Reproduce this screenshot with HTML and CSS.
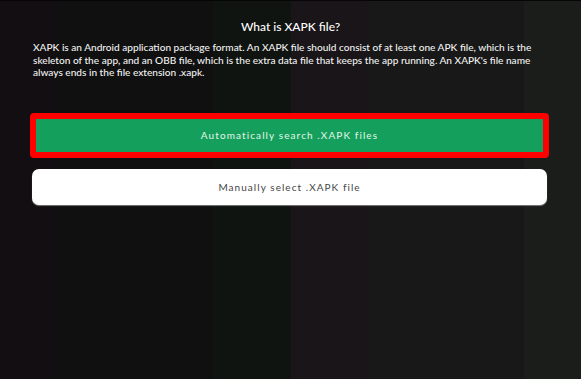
FILE: index.html
```html
<!DOCTYPE html>
<html lang="en">
<head>
	<meta charset="UTF-8">
	<meta name="viewport" content="width=device-width, initial-scale=1.0">
	<title>What is XAPK file?</title>
	<link rel="stylesheet" href="styles.css">
</head>
<body>

	<div class="container">
		<h2 class="title">What is XAPK file?</h2>
		<p class="info">XAPK is an Android application package format. An XAPK file should consist of at least one APK file, which is the skeleton of the app, and an OBB file, which is the extra data file that keeps the app running. An XAPK's file name always ends in the file extension .xapk.</p>

		<div class="actions">
			<button class="btn btn-auto">Automatically search .XAPK files</button>
			<button class="btn btn-manual">Manually select .XAPK file</button>
		</div>
	</div>

</body>
</html>
```

FILE: styles.css
```css
* {
	box-sizing: border-box;
}
body {
	font-family: Lato, "Open Sans", sans-serif;
	margin: 0;
	padding: 0;
	min-height: 100vh;
	color: #fff;
	background: linear-gradient(to right,
		#120e11 0, #120e11 55px,
		#101010 55px, #101010 213px,
		#101410 213px, #101410 291px,
		#191518 291px, #191518 367px,
		#181818 367px, #181818 524px,
		#1a1d1a 524px);
	border-top: 1px solid #060606;
}
.container {
	padding: 18px 33px 0 33px;
}
.title {
	margin: 0;
	text-align: center;
	font-size: 12px;
	font-weight: 500;
	line-height: 16px;
}
.info {
	margin: 6px 0 0 0;
	font-size: 10.1px;
	font-weight: 500;
	line-height: 12.5px;
	color: #f2f2f2;
}
.actions {
	display: flex;
	flex-direction: column;
	margin-top: 34px;
	gap: 11px;
}
.btn {
	display: block;
	font-family: Lato, "Open Sans", sans-serif;
	font-size: 10px;
	letter-spacing: 1.1px;
	cursor: pointer;
}
.btn-auto {
	margin: 0 -1px 0 -3px;
	height: 45px;
	background: #14a05c;
	color: #e4f6ea;
	border: 6px solid #ff0000;
	border-radius: 4px;
}
.btn-manual {
	margin: 0 1px 0 -1px;
	height: 36px;
	background: #fff;
	color: #444;
	letter-spacing: 1.05px;
	border: none;
	border-radius: 7px;
	box-shadow: 0 1px 1px rgba(160, 160, 160, 0.7);
}
```
